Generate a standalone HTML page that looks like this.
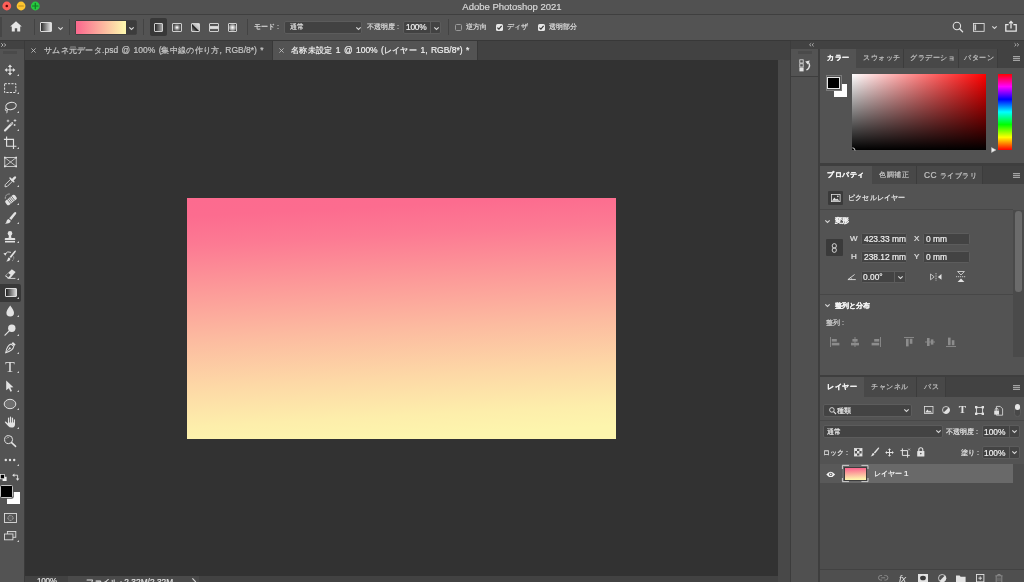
<!DOCTYPE html>
<html lang="ja">
<head>
<meta charset="utf-8">
<title>Adobe Photoshop 2021</title>
<style>
*{box-sizing:border-box;margin:0;padding:0}
html,body{width:1024px;height:582px;overflow:hidden;background:#535353}
body{font-family:"Liberation Sans",sans-serif;font-size:8.6px;color:#dcdcdc;line-height:1;position:relative}
.a{position:absolute}
.g{will-change:transform}
.t{position:absolute;white-space:nowrap;will-change:transform;-webkit-text-stroke:0.2px;line-height:10px;height:10px;font-size:7.3px}
.n{font-size:8.4px;letter-spacing:-0.25px;color:#f0f0f0}
.n2{font-size:8.4px;letter-spacing:0;color:#f0f0f0}
.b{font-weight:bold}
.j{font-size:8.4px;letter-spacing:0.3px}
svg{position:absolute;overflow:visible}
/* ---------- frame ---------- */
#title{left:0;top:0;width:1024px;height:14px;background:#515151}
#title-line{left:0;top:13.5px;width:1024px;height:1.3px;background:#3f3f3f}
#opts{left:0;top:15px;width:1024px;height:24.5px;background:#535353}
#tabbar{left:0;top:39.5px;width:1024px;height:20.5px;background:#424242;border-top:1px solid #383838}
#canvas{left:25px;top:60.4px;width:753px;height:515.6px;background:#323232}
#vscroll{left:778px;top:60.4px;width:12px;height:522px;background:#484848}
#status{left:25px;top:576px;width:753px;height:6px;background:#424242}
#tools{left:0;top:49px;width:24px;height:533px;background:#535353}
#tools-head{left:0;top:39.5px;width:24px;height:9.5px;background:#424242;border-top:1px solid #3a3a3a}
#tools-edge{left:24px;top:40.5px;width:1px;height:542px;background:#3a3a3a}
.sep{position:absolute;width:1px;background:#434343;top:19px;height:16px}
.field{position:absolute;background:#454545;border:1px solid #656565;border-radius:2px}
.dd{position:absolute;background:#424242;border:1px solid #5c5c5c;border-radius:2px}
.cb{position:absolute;width:7px;height:7px;border-radius:1.5px}
.cb.off{border:1px solid #9a9a9a;background:#535353}
.cb.on{background:#e6e6e6}
.gi{top:22.5px;width:9.5px;height:9.5px;border:1px solid #cfcfcf;border-radius:1px}
/* ---------- dock ---------- */
#dock-edge{left:789.5px;top:40.5px;width:1.6px;height:542px;background:#3c3c3c}
#strip{left:791px;top:49px;width:27px;height:533px;background:#505050}
#strip-cell{left:791px;top:49px;width:27px;height:28px;background:#535353;border-bottom:1px solid #3e3e3e}
#strip-edge{left:818px;top:49px;width:2px;height:533px;background:#3e3e3e}
#dock-head{left:791px;top:39.5px;width:233px;height:9.5px;background:#424242;border-top:1px solid #3a3a3a}
#dock-bg{left:820px;top:49px;width:204px;height:533px;background:#3e3e3e}
.ptabs{position:absolute;left:820px;width:204px;height:19px;background:#424242}
.ptab{position:absolute;top:0;height:19px;background:#484848;border-right:1px solid #3c3c3c}
.ptab.on{background:#535353;border-right:none}
.pbody{position:absolute;left:820px;width:204px;background:#535353}
</style>
</head>
<body>
<!-- title bar -->
<div class="a" id="title"></div>
<div class="a" id="title-line"></div>
<svg style="left:0;top:0" width="44" height="13" viewBox="0 0 44 13"><circle cx="6.8" cy="6" r="4.4" fill="#ff5f58"/><circle cx="6.8" cy="6" r="1.3" fill="#5c0805"/><circle cx="21.05" cy="6" r="4.4" fill="#fec430"/><rect x="18.3" y="5.4" width="5.5" height="1.2" rx="0.4" fill="#b98a1c"/><circle cx="35.3" cy="6" r="4.4" fill="#28c940"/><path d="M32.6 6 H38 M35.3 3.3 V8.7" stroke="#0d7d24" stroke-width="1.2" stroke-linecap="round"/></svg>
<div class="t" style="left:412px;width:200px;text-align:center;top:2px;font-size:9.5px;color:#d8d8d8">Adobe Photoshop 2021</div>

<!-- options bar -->
<div class="a" id="opts"></div>
<div class="a" style="left:0;top:17px;width:2px;height:20px;background:#464646"></div>
<!-- home -->
<svg style="left:10px;top:21px" width="12" height="11" viewBox="0 0 12 11"><path d="M6 0.2 L0.2 5.4 H1.8 V10.6 H4.8 V7.2 H7.2 V10.6 H10.2 V5.4 H11.8 Z" fill="#e6e6e6"/></svg>
<div class="sep" style="left:34px"></div>
<!-- gradient tool icon -->
<div class="a" style="left:40px;top:22px;width:12px;height:9.5px;border:1px solid #dadada;border-radius:1px;background:linear-gradient(90deg,#2c2c2c,#e8e8e8)"></div>
<svg style="left:58px;top:26.5px" width="5" height="3" viewBox="0 0 5 3"><path d="M0.3 0.3 L2.5 2.5 L4.7 0.3" fill="none" stroke="#d6d6d6" stroke-width="1.1"/></svg>
<div class="sep" style="left:69px"></div>
<!-- gradient preview -->
<div class="a" style="left:75px;top:20px;width:62px;height:15px;background:#3c3c3c;border:1px solid #404040;border-radius:2px"></div>
<div class="a" style="left:76px;top:21px;width:50px;height:13px;background:linear-gradient(90deg,#fb6c8f 4%,#fdf5ad 96%)"></div>
<svg style="left:128.5px;top:26.5px" width="5" height="3" viewBox="0 0 5 3"><path d="M0.3 0.3 L2.5 2.5 L4.7 0.3" fill="none" stroke="#d6d6d6" stroke-width="1.1"/></svg>
<div class="sep" style="left:143px"></div>
<!-- gradient type icons -->
<div class="a" style="left:150px;top:18px;width:17px;height:18px;background:#383838;border-radius:2px"></div>
<div class="a gi" style="left:153.5px;background:linear-gradient(90deg,#262626,#a2a2a2)"></div>
<div class="a gi" style="left:172px;background:radial-gradient(circle closest-side,#f6f6f6 12%,#8c8c8c 60%,#4c4c4c 110%)"></div>
<div class="a gi" style="left:190.5px;background:linear-gradient(225deg,#e2e2e2 0%,#b4b4b4 49%,#0e0e0e 51%,#9a9a9a 100%)"></div>
<div class="a gi" style="left:209px;background:linear-gradient(180deg,#4a4a4a 0%,#5a5a5a 22%,#cfcfcf 34%,#dedede 50%,#cfcfcf 66%,#5a5a5a 78%,#4a4a4a 100%)"></div>
<div class="a gi" style="left:227.5px;background:radial-gradient(circle closest-side,#f6f6f6 10%,#9a9a9a 80%,#1c1c1c 138%)"></div>
<div class="sep" style="left:247px"></div>
<!-- mode -->
<div class="t" style="left:254px;top:22px">モード :</div>
<div class="dd" style="left:284px;top:20.5px;width:78px;height:13.5px"></div>
<div class="t" style="left:290px;top:22px">通常</div>
<svg style="left:355.5px;top:26.5px" width="5" height="3" viewBox="0 0 5 3"><path d="M0.3 0.3 L2.5 2.5 L4.7 0.3" fill="none" stroke="#d6d6d6" stroke-width="1.1"/></svg>
<div class="t" style="left:367px;top:22px">不透明度 :</div>
<div class="dd" style="left:403px;top:20.5px;width:38px;height:13.5px"></div>
<div class="a" style="left:430px;top:21.5px;width:1px;height:11.5px;background:#5c5c5c"></div>
<div class="t n" style="left:406px;top:22px">100%</div>
<svg style="left:433.5px;top:26.5px" width="5" height="3" viewBox="0 0 5 3"><path d="M0.3 0.3 L2.5 2.5 L4.7 0.3" fill="none" stroke="#d6d6d6" stroke-width="1.1"/></svg>
<div class="sep" style="left:448px"></div>
<div class="cb off" style="left:455px;top:23.5px"></div>
<div class="t" style="left:465.5px;top:22px">逆方向</div>
<div class="cb on" style="left:496px;top:23.5px"></div>
<svg style="left:496px;top:23.5px" width="7" height="7" viewBox="0 0 7 7"><path d="M1.4 3.6 L2.9 5.1 L5.6 1.8" fill="none" stroke="#333" stroke-width="1.1"/></svg>
<div class="t" style="left:507px;top:22px">ディザ</div>
<div class="cb on" style="left:538px;top:23.5px"></div>
<svg style="left:538px;top:23.5px" width="7" height="7" viewBox="0 0 7 7"><path d="M1.4 3.6 L2.9 5.1 L5.6 1.8" fill="none" stroke="#333" stroke-width="1.1"/></svg>
<div class="t" style="left:549px;top:22px">透明部分</div>
<!-- right icons -->
<svg style="left:952px;top:21px" width="12" height="12" viewBox="0 0 12 12"><circle cx="4.9" cy="5" r="3.7" fill="none" stroke="#e0e0e0" stroke-width="1.1"/><path d="M7.6 7.8 L10.6 10.8" stroke="#e0e0e0" stroke-width="1.3" stroke-linecap="round"/></svg>
<svg style="left:973px;top:23px" width="11.6" height="8.8" viewBox="0 0 11.6 8.8"><rect x="0.45" y="0.45" width="10.7" height="7.9" fill="#4c4c4c" stroke="#dcdcdc" stroke-width="0.9"/><rect x="1.5" y="1.5" width="1.6" height="5.8" fill="#cfcfcf"/></svg>
<svg style="left:991.5px;top:26px" width="5" height="3" viewBox="0 0 5 3"><path d="M0.3 0.3 L2.5 2.5 L4.7 0.3" fill="none" stroke="#d6d6d6" stroke-width="1.1"/></svg>
<svg style="left:1005px;top:20px" width="12" height="12" viewBox="0 0 12 12"><path d="M3.6 4.6 H0.8 V11.2 H11.2 V4.6 H8.4" fill="none" stroke="#e6e6e6" stroke-width="1.3"/><path d="M6 8.4 V1.8 M4.1 3.4 L6 1.4 L7.9 3.4" fill="none" stroke="#e6e6e6" stroke-width="1.3"/></svg>


<!-- tab bar -->
<div class="a" id="tabbar"></div>
<div class="a" style="left:273px;top:40.5px;width:203.5px;height:19.5px;background:#535353"></div>
<div class="a" style="left:272px;top:40.5px;width:1px;height:19.5px;background:#383838"></div>
<div class="a" style="left:476.5px;top:40.5px;width:1px;height:19.5px;background:#383838"></div>
<svg style="left:31px;top:47.5px" width="5" height="5" viewBox="0 0 5 5"><path d="M0.4 0.4 L4.6 4.6 M4.6 0.4 L0.4 4.6" stroke="#c8c8c8" stroke-width="0.8"/></svg>
<div class="t" style="left:43.5px;top:45px;font-size:8.5px;word-spacing:1px;color:#c6c6c6"><span class="j">サムネ元データ</span>.psd @ 100% (<span class="j">集中線の作り方</span>, RGB/8*) *</div>
<svg style="left:278.5px;top:47.5px" width="5" height="5" viewBox="0 0 5 5"><path d="M0.4 0.4 L4.6 4.6 M4.6 0.4 L0.4 4.6" stroke="#c8c8c8" stroke-width="0.8"/></svg>
<div class="t" style="left:290.5px;top:45px;font-size:8.5px;word-spacing:1px;color:#f0f0f0"><span class="j">名称未設定</span> 1 @ 100% (<span class="j">レイヤー</span> 1, RGB/8*) *</div>


<!-- canvas -->
<div class="a" id="canvas"></div>
<div class="a" id="vscroll"></div>
<div class="a" id="status"></div>
<div class="a" style="left:68px;top:576px;width:131px;height:6px;background:#4a4a4a"></div>
<div class="t n" style="left:36.5px;top:577.4px;font-size:8.2px;color:#e0e0e0">100%</div>
<div class="t" style="left:86px;top:577.4px;font-size:7.6px;color:#e0e0e0">ファイル : <span style="font-size:8.4px">2.32M/2.32M</span></div>
<svg style="left:192px;top:578px" width="4" height="7" viewBox="0 0 4 7"><path d="M0.4 0.4 L3.4 3.5 L0.4 6.6" fill="none" stroke="#d6d6d6" stroke-width="1.1"/></svg>
<div class="a" id="art" style="left:187px;top:198px;width:429px;height:241px;background:linear-gradient(177deg,#fc6b8f 0%,#fc6c8f 7%,#fc7a93 18%,#fc9b99 36%,#fcbba0 54%,#fdd8a6 72%,#fdeeab 87%,#fdf5ad 95%,#fdf5ad 100%)"></div>

<!-- tools -->
<div class="a" id="tools-head"></div>
<div class="a" id="tools"></div>
<div class="a" id="tools-edge"></div>
<svg style="left:0.5px;top:42.5px" width="6" height="4" viewBox="0 0 6 4"><path d="M0.3 0.3 L2 2 L0.3 3.7 M3 0.3 L4.7 2 L3 3.7" fill="none" stroke="#d0d0d0" stroke-width="0.8"/></svg>
<div class="a" style="left:3px;top:50.7px;width:14px;height:3px;background:#4a4a4a"></div>
<svg style="left:3px;top:63.0px" width="14" height="14" viewBox="0 0 14 14"><path d="M7 1.6 L9.1 4.1 H7.6 V6.4 H9.9 V4.9 L12.4 7 L9.9 9.1 V7.6 H7.6 V9.9 H9.1 L7 12.4 L4.9 9.9 H6.4 V7.6 H4.1 V9.1 L1.6 7 L4.1 4.9 V6.4 H6.4 V4.1 H4.9 Z" fill="#e2e2e2"/></svg>
<svg style="left:17.3px;top:74.2px" width="2" height="2" viewBox="0 0 2 2"><path d="M2 0 V2 H0 Z" fill="#cfcfcf"/></svg>
<svg style="left:3px;top:81.0px" width="14" height="14" viewBox="0 0 14 14"><rect x="1.6" y="2.7" width="11.2" height="8.8" fill="none" stroke="#e2e2e2" stroke-width="1" stroke-dasharray="2.2 1.2"/></svg>
<svg style="left:17.3px;top:92.2px" width="2" height="2" viewBox="0 0 2 2"><path d="M2 0 V2 H0 Z" fill="#cfcfcf"/></svg>
<svg style="left:3px;top:100.0px" width="14" height="14" viewBox="0 0 14 14"><ellipse cx="8" cy="6" rx="5.3" ry="3.6" transform="rotate(-14 8 6)" fill="none" stroke="#e2e2e2" stroke-width="1"/><circle cx="3.5" cy="9.6" r="1.2" fill="none" stroke="#e2e2e2" stroke-width="0.9"/><path d="M3.9 10.7 Q4.6 12 3.6 13.2" fill="none" stroke="#e2e2e2" stroke-width="0.9"/></svg>
<svg style="left:17.3px;top:111.2px" width="2" height="2" viewBox="0 0 2 2"><path d="M2 0 V2 H0 Z" fill="#cfcfcf"/></svg>
<svg style="left:3px;top:118.0px" width="14" height="14" viewBox="0 0 14 14"><path d="M2 12.6 L9.2 5.2" stroke="#e2e2e2" stroke-width="2.1" stroke-linecap="round"/><path d="M7.8 6.6 L9.2 5.2" stroke="#555" stroke-width="0.9"/><path d="M5 1.6 V4.2 M3.7 2.9 H6.3 M12 1.2 V3.8 M10.7 2.5 H13.3 M11.6 6 V8 M10.6 7 H12.6" stroke="#e2e2e2" stroke-width="0.8"/></svg>
<svg style="left:17.3px;top:129.2px" width="2" height="2" viewBox="0 0 2 2"><path d="M2 0 V2 H0 Z" fill="#cfcfcf"/></svg>
<svg style="left:3px;top:136.0px" width="14" height="14" viewBox="0 0 14 14"><path d="M3.6 0.6 V10.2 H13.4 M0.9 3.3 H10.5 V13" fill="none" stroke="#e2e2e2" stroke-width="1.15"/></svg>
<svg style="left:17.3px;top:147.2px" width="2" height="2" viewBox="0 0 2 2"><path d="M2 0 V2 H0 Z" fill="#cfcfcf"/></svg>
<svg style="left:3px;top:155.4px" width="14" height="14" viewBox="0 0 14 14"><rect x="1.8" y="2.6" width="11.4" height="8.8" fill="none" stroke="#e2e2e2" stroke-width="0.8"/><path d="M1.8 2.6 L13.2 11.4 M13.2 2.6 L1.8 11.4" stroke="#e2e2e2" stroke-width="0.75"/><path d="M1 1.8 h1.6 v1.6 h-1.6 z M12.4 1.8 h1.6 v1.6 h-1.6 z M1 10.6 h1.6 v1.6 h-1.6 z M12.4 10.6 h1.6 v1.6 h-1.6 z" fill="#e2e2e2"/></svg>
<svg style="left:3px;top:174.0px" width="14" height="14" viewBox="0 0 14 14"><path d="M2 12.8 L2.3 10.6 L7.4 5.5 L9.3 7.4 L4.2 12.5 Z" fill="none" stroke="#e2e2e2" stroke-width="0.9"/><path d="M7 4 L10.8 7.8" stroke="#e2e2e2" stroke-width="1.5" stroke-linecap="round"/><path d="M8.6 5.2 L11 2.8 Q12.2 1.8 13 2.8 Q13.6 3.6 12.6 4.6 L10.2 7 Z" fill="#e2e2e2"/></svg>
<svg style="left:17.3px;top:185.2px" width="2" height="2" viewBox="0 0 2 2"><path d="M2 0 V2 H0 Z" fill="#cfcfcf"/></svg>
<svg style="left:3px;top:192.0px" width="14" height="14" viewBox="0 0 14 14"><g transform="rotate(-38 8 8)"><rect x="2" y="5.2" width="12" height="5.6" rx="1.6" fill="#e2e2e2"/><path d="M5.6 5.2 V10.8 M7.3 5.2 V10.8 M9 5.2 V10.8 M10.7 5.2 V10.8" stroke="#535353" stroke-width="0.7"/></g><path d="M2.3 6.6 Q2.2 2 6.6 2" fill="none" stroke="#e2e2e2" stroke-width="0.8" stroke-dasharray="1.2 0.8"/></svg>
<svg style="left:17.3px;top:203.2px" width="2" height="2" viewBox="0 0 2 2"><path d="M2 0 V2 H0 Z" fill="#cfcfcf"/></svg>
<svg style="left:3px;top:211.0px" width="14" height="14" viewBox="0 0 14 14"><path d="M12.9 1.2 Q13.8 2 13 3 L8.3 9 L6.2 7.2 L11.2 1.6 Q12.1 0.6 12.9 1.2 Z" fill="#e2e2e2"/><path d="M5.6 7.9 L7.7 9.7 Q7.6 12.6 2 12.8 Q3.6 11.4 3.6 10 Q3.9 8.1 5.6 7.9 Z" fill="#e2e2e2"/></svg>
<svg style="left:17.3px;top:222.2px" width="2" height="2" viewBox="0 0 2 2"><path d="M2 0 V2 H0 Z" fill="#cfcfcf"/></svg>
<svg style="left:3px;top:229.7px" width="14" height="14" viewBox="0 0 14 14"><circle cx="7" cy="3.4" r="2.3" fill="#e2e2e2"/><path d="M6 5 H8 L8.4 8 H11.4 Q12.2 8 12.2 8.8 V10 H1.8 V8.8 Q1.8 8 2.6 8 H5.6 Z" fill="#e2e2e2"/><rect x="2" y="10.9" width="10" height="1.6" fill="#e2e2e2"/></svg>
<svg style="left:17.3px;top:240.9px" width="2" height="2" viewBox="0 0 2 2"><path d="M2 0 V2 H0 Z" fill="#cfcfcf"/></svg>
<svg style="left:3px;top:248.5px" width="14" height="14" viewBox="0 0 14 14"><path d="M12.6 1.6 Q13.2 2.2 12.4 3.2 L8 9 L6.6 7.8 L11.4 2 Q12.1 1.2 12.6 1.6 Z" fill="#e2e2e2"/><path d="M6.1 8.5 L7.5 9.7 Q7.2 12 3.2 12.6 Q4.8 11 4.8 9.8 Q5 8.5 6.1 8.5 Z" fill="#e2e2e2"/><path d="M1.8 5 Q4.6 1.6 8 3.4" fill="none" stroke="#e2e2e2" stroke-width="0.9"/><path d="M0.4 4.2 L3.6 4 L2.4 6.8 Z" fill="#e2e2e2"/><path d="M10.6 7.6 Q11.4 10.4 8.8 12.2" fill="none" stroke="#e2e2e2" stroke-width="0.7" stroke-dasharray="1 0.8"/></svg>
<svg style="left:17.3px;top:259.7px" width="2" height="2" viewBox="0 0 2 2"><path d="M2 0 V2 H0 Z" fill="#cfcfcf"/></svg>
<svg style="left:3px;top:267.0px" width="14" height="14" viewBox="0 0 14 14"><path d="M8.8 2.2 L12.6 5 L7.4 11 H4.6 L2 9 Z" fill="#e2e2e2"/><path d="M3 8.6 L5.4 10.4 L7.6 7.8 L5.2 6 Z" fill="#535353"/><path d="M4.6 11.4 H12.4" stroke="#e2e2e2" stroke-width="0.9"/></svg>
<svg style="left:17.3px;top:278.2px" width="2" height="2" viewBox="0 0 2 2"><path d="M2 0 V2 H0 Z" fill="#cfcfcf"/></svg>
<div class="a" style="left:0;top:284px;width:21px;height:17.5px;background:#383838;border-radius:0 2px 2px 0"></div>
<div class="a" style="left:4.7px;top:287.6px;width:12px;height:9.6px;border:1px solid #dcdcdc;border-radius:1px;background:linear-gradient(90deg,#1e1e1e,#d8d8d8)"></div>
<svg style="left:17.3px;top:296.6px" width="2" height="2" viewBox="0 0 2 2"><path d="M2 0 V2 H0 Z" fill="#cfcfcf"/></svg>
<svg style="left:3px;top:304.0px" width="14" height="14" viewBox="0 0 14 14"><path d="M7.2 1.6 Q11 6.6 11 8.8 A3.8 3.8 0 0 1 3.4 8.8 Q3.4 6.6 7.2 1.6 Z" fill="#e2e2e2"/></svg>
<svg style="left:17.3px;top:315.2px" width="2" height="2" viewBox="0 0 2 2"><path d="M2 0 V2 H0 Z" fill="#cfcfcf"/></svg>
<svg style="left:3px;top:323.0px" width="14" height="14" viewBox="0 0 14 14"><circle cx="8.8" cy="5.2" r="3.7" fill="#e2e2e2"/><path d="M6.2 7.8 L2 12.2" stroke="#e2e2e2" stroke-width="1.2" stroke-linecap="round"/></svg>
<svg style="left:17.3px;top:334.2px" width="2" height="2" viewBox="0 0 2 2"><path d="M2 0 V2 H0 Z" fill="#cfcfcf"/></svg>
<svg style="left:3px;top:341.0px" width="14" height="14" viewBox="0 0 14 14"><g transform="rotate(42 7 7)"><path d="M5.2 0.6 H8.8 V2.6 H5.2 Z" fill="#e2e2e2"/><path d="M5.2 3.3 H8.8 Q11 7 7 13.4 Q3 7 5.2 3.3 Z" fill="none" stroke="#e2e2e2" stroke-width="1"/><path d="M7 13 V8.2" stroke="#e2e2e2" stroke-width="0.8"/><circle cx="7" cy="7.4" r="1" fill="#e2e2e2"/></g></svg>
<svg style="left:17.3px;top:352.2px" width="2" height="2" viewBox="0 0 2 2"><path d="M2 0 V2 H0 Z" fill="#cfcfcf"/></svg>
<div class="a g" style="left:4.4px;top:359.3px;width:12px;height:16px;font-family:'Liberation Serif',serif;font-size:15.5px;line-height:16px;color:#e2e2e2;text-align:center">T</div>
<svg style="left:17.3px;top:371.2px" width="2" height="2" viewBox="0 0 2 2"><path d="M2 0 V2 H0 Z" fill="#cfcfcf"/></svg>
<svg style="left:3px;top:378.5px" width="14" height="14" viewBox="0 0 14 14"><path d="M3.2 1.4 L10.4 8.2 L7.3 8.5 L9 12 L7.5 12.7 L5.8 9.2 L3.2 11.2 Z" fill="#e2e2e2"/></svg>
<svg style="left:17.3px;top:389.7px" width="2" height="2" viewBox="0 0 2 2"><path d="M2 0 V2 H0 Z" fill="#cfcfcf"/></svg>
<svg style="left:3px;top:397.0px" width="14" height="14" viewBox="0 0 14 14"><ellipse cx="7" cy="7" rx="5.8" ry="4.7" fill="#6e6e6e" stroke="#e2e2e2" stroke-width="1"/></svg>
<svg style="left:17.3px;top:408.2px" width="2" height="2" viewBox="0 0 2 2"><path d="M2 0 V2 H0 Z" fill="#cfcfcf"/></svg>
<svg style="left:3px;top:415.4px" width="14" height="14" viewBox="0 0 14 14"><path d="M5.55 3.1 V8.4 M7.5 2.1 V8.4 M9.45 3.1 V8.4 M11.4 4.9 V8.8" stroke="#e2e2e2" stroke-width="1.2" stroke-linecap="round" fill="none"/><path d="M4.95 7.4 H12 V9.4 Q12 12.5 8.6 12.5 Q6.4 12.5 5.2 10.9 L2 7.5 Q1.5 6.7 2.3 6.5 Q3 6.4 4.95 8.6 Z" fill="#e2e2e2"/></svg>
<svg style="left:17.3px;top:426.6px" width="2" height="2" viewBox="0 0 2 2"><path d="M2 0 V2 H0 Z" fill="#cfcfcf"/></svg>
<svg style="left:3px;top:434.0px" width="14" height="14" viewBox="0 0 14 14"><circle cx="5.6" cy="5.6" r="4" fill="none" stroke="#e2e2e2" stroke-width="1"/><path d="M3.6 4.6 Q4.4 3.2 6 3.2" fill="none" stroke="#e2e2e2" stroke-width="0.6"/><path d="M8.6 8.6 L12.6 12.4" stroke="#e2e2e2" stroke-width="1.5" stroke-linecap="round"/></svg>
<svg style="left:3px;top:452.6px" width="14" height="14" viewBox="0 0 14 14"><circle cx="2.8" cy="7" r="1.2" fill="#e2e2e2"/><circle cx="7" cy="7" r="1.2" fill="#e2e2e2"/><circle cx="11.2" cy="7" r="1.2" fill="#e2e2e2"/></svg>
<svg style="left:17.3px;top:463.8px" width="2" height="2" viewBox="0 0 2 2"><path d="M2 0 V2 H0 Z" fill="#cfcfcf"/></svg>
<svg style="left:0;top:473.5px" width="7" height="7.5" viewBox="0 0 7 7.5"><rect x="2.6" y="2.8" width="4" height="4.2" fill="#f2f2f2"/><rect x="0.4" y="0.6" width="4" height="4.2" fill="#000" stroke="#f2f2f2" stroke-width="0.7"/></svg>
<svg style="left:11.6px;top:472.8px" width="8" height="8" viewBox="0 0 8 8"><path d="M1.8 2.2 H5.6 V6" fill="none" stroke="#e2e2e2" stroke-width="0.9"/><path d="M0.2 2.2 L2.4 0.4 V4 Z M5.6 7.8 L3.8 5.6 H7.4 Z" fill="#e2e2e2"/></svg>
<div class="a" style="left:6.8px;top:491.6px;width:13px;height:12.8px;background:#fff"></div>
<div class="a" style="left:-0.5px;top:484.6px;width:13.4px;height:13px;background:#000;border:1px solid #c4c4c4;border-radius:1.5px;box-shadow:0 0 0 0.8px #535353"></div>
<svg style="left:3.6px;top:512.8px" width="13" height="10" viewBox="0 0 13 10"><rect x="0.5" y="0.5" width="12" height="9" fill="none" stroke="#dcdcdc" stroke-width="0.9"/><circle cx="6.5" cy="5" r="2.6" fill="#5e5e5e" stroke="#dcdcdc" stroke-width="0.7" stroke-dasharray="1 0.7"/></svg>
<svg style="left:4px;top:531.4px" width="12.5" height="9.5" viewBox="0 0 12.5 9.5"><rect x="3.4" y="0.5" width="8.4" height="5.8" fill="#5e5e5e" stroke="#dcdcdc" stroke-width="0.9"/><rect x="0.5" y="3" width="8.4" height="5.8" fill="#535353" stroke="#dcdcdc" stroke-width="0.9"/></svg>
<svg style="left:17.3px;top:540.4px" width="2" height="2" viewBox="0 0 2 2"><path d="M2 0 V2 H0 Z" fill="#cfcfcf"/></svg>


<!-- dock -->
<div class="a" id="dock-edge"></div>
<div class="a" id="dock-head"></div>
<div class="a" id="dock-bg"></div>
<div class="a" id="strip"></div>
<div class="a" id="strip-cell"></div>
<div class="a" id="strip-edge"></div>
<svg style="left:809px;top:42.5px" width="5.4" height="3.6" viewBox="0 0 6 4"><path d="M2.4 0.3 L0.6 2 L2.4 3.7 M5.2 0.3 L3.4 2 L5.2 3.7" fill="none" stroke="#d0d0d0" stroke-width="0.8"/></svg>
<svg style="left:1014px;top:42.5px" width="5.4" height="3.6" viewBox="0 0 6 4"><path d="M0.6 0.3 L2.4 2 L0.6 3.7 M3.4 0.3 L5.2 2 L3.4 3.7" fill="none" stroke="#d0d0d0" stroke-width="0.8"/></svg>
<div class="a" style="left:797.5px;top:51.2px;width:14px;height:2.5px;background:#4a4a4a"></div>
<svg style="left:798.6px;top:58.6px" width="13" height="13" viewBox="0 0 13 13"><rect x="0.8" y="0.8" width="3.4" height="3.2" fill="none" stroke="#e2e2e2" stroke-width="0.8"/><rect x="0.8" y="4.8" width="3.4" height="3.2" fill="none" stroke="#e2e2e2" stroke-width="0.8"/><rect x="0.4" y="8.6" width="4.2" height="3.8" fill="#e2e2e2"/><path d="M7.3 11 Q8.6 10.6 9.8 9 Q11.6 6.4 9.4 3.4" fill="none" stroke="#e2e2e2" stroke-width="1.3"/><path d="M6.2 2.5 L10.8 1.5 L8.8 5.4 Z" fill="#e2e2e2"/></svg>
<div class="ptabs" style="top:49px"><div class="ptab on" style="left:0;width:36px"></div><div class="ptab" style="left:36px;width:48px"></div><div class="ptab" style="left:84px;width:54.5px"></div><div class="ptab" style="left:138.5px;width:39px"></div></div>
<div class="t b" style="left:826.5px;top:53px;font-size:7.4px;letter-spacing:0.5px;color:#f2f2f2">カラー</div>
<div class="t" style="left:863px;top:53px;font-size:7.4px;letter-spacing:0.5px;color:#c2c2c2">スウォッチ</div>
<div class="t" style="left:910px;top:53px;font-size:7.4px;letter-spacing:0.5px;color:#c2c2c2">グラデーショ</div>
<div class="t" style="left:964px;top:53px;font-size:7.4px;letter-spacing:0.5px;color:#c2c2c2">パターン</div>
<svg style="left:1012.5px;top:56px" width="7" height="5" viewBox="0 0 7 5"><path d="M0 0.6 H7 M0 2.5 H7 M0 4.4 H7" stroke="#a4a4a4" stroke-width="1.1"/></svg>
<div class="pbody" style="top:68px;height:95px"></div>
<div class="a" style="left:834.2px;top:84px;width:12.8px;height:12.8px;background:#fff"></div>
<div class="a" style="left:825.6px;top:75.4px;width:16px;height:15.6px;border:1px solid #7a7a7a;background:#535353;padding:0.8px"><div style="width:100%;height:100%;border:1px solid #e6e6e6;background:#000"></div></div>
<div class="a" style="left:852px;top:74px;width:134px;height:76px;background:linear-gradient(to top,#000,rgba(0,0,0,0)),linear-gradient(to right,#fff,#f00)"></div>
<svg style="left:848.6px;top:146.6px" width="7" height="7" viewBox="0 0 7 7"><defs><clipPath id="cf"><rect x="3.4" y="-1" width="5" height="4.4"/></clipPath></defs><circle cx="3.4" cy="3.4" r="2.6" fill="none" stroke="#e8e8e8" stroke-width="0.9" clip-path="url(#cf)"/></svg>
<div class="a" style="left:998px;top:74px;width:14px;height:76px;background:linear-gradient(to bottom,#f00 0%,#f0f 16.6%,#00f 33.3%,#0ff 50%,#0f0 66.6%,#ff0 83.3%,#f00 100%)"></div>
<svg style="left:991px;top:147px" width="5.5" height="6" viewBox="0 0 5.5 6"><path d="M0.5 0.5 L5 3 L0.5 5.5 Z" fill="#f0f0f0" stroke="#bbb" stroke-width="0.5"/></svg>
<div class="ptabs" style="top:165.5px;height:18.5px"><div class="ptab on" style="left:0;width:52px;height:18.5px"></div><div class="ptab" style="left:52px;width:44.5px;height:18.5px"></div><div class="ptab" style="left:96.5px;width:66px;height:18.5px"></div></div>
<div class="t b" style="left:826.7px;top:169.5px;font-size:7.4px;letter-spacing:0.5px;color:#f2f2f2">プロパティ</div>
<div class="t" style="left:878.7px;top:169.5px;font-size:7.4px;letter-spacing:0.5px;color:#c2c2c2">色調補正</div>
<div class="t" style="left:923.5px;top:169.5px;font-size:7.4px;letter-spacing:0.5px;color:#c2c2c2"><span style="font-size:8.4px">CC</span> ライブラリ</div>
<svg style="left:1012.5px;top:172.8px" width="7" height="5" viewBox="0 0 7 5"><path d="M0 0.6 H7 M0 2.5 H7 M0 4.4 H7" stroke="#a4a4a4" stroke-width="1.1"/></svg>
<div class="pbody" style="top:184px;height:191px"></div>
<div class="a" style="left:828px;top:190.5px;width:14.5px;height:14px;background:#3a3a3a;border-radius:1px"></div>
<svg style="left:830.5px;top:193.5px" width="9.5" height="8" viewBox="0 0 9.5 8"><rect x="0.4" y="0.4" width="8.7" height="7.2" fill="none" stroke="#e2e2e2" stroke-width="0.8"/><path d="M1 6.8 L3.4 3.4 L5 5.4 L6.2 4.4 L8.4 6.8 Z" fill="#e2e2e2"/><circle cx="6.8" cy="2.4" r="0.8" fill="#e2e2e2"/></svg>
<div class="t" style="left:847.5px;top:193.2px;font-size:7.2px;letter-spacing:0.2px;color:#e8e8e8">ピクセルレイヤー</div>
<div class="a" style="left:820px;top:208.5px;width:192.5px;height:1px;background:#474747"></div>
<div class="a" style="left:820px;top:293.7px;width:192.5px;height:1px;background:#474747"></div>
<div class="a" style="left:1012.5px;top:209.5px;width:11.5px;height:147px;background:#4a4a4a"></div>
<div class="a" style="left:1015px;top:211.4px;width:6.6px;height:80.3px;background:#6b6b6b;border-radius:3.3px"></div>
<svg style="left:825.3px;top:219.8px" width="5" height="3" viewBox="0 0 5 3"><path d="M0.3 0.3 L2.5 2.5 L4.7 0.3" fill="none" stroke="#d6d6d6" stroke-width="1.1"/></svg>
<div class="t b" style="left:835px;top:216.2px;font-size:7.2px;color:#f2f2f2">変形</div>
<div class="a" style="left:826px;top:239px;width:17px;height:17.3px;background:#3a3a3a;border-radius:1px"></div>
<svg style="left:831.2px;top:242.6px" width="6.6" height="10" viewBox="0 0 6.6 10"><ellipse cx="3.3" cy="2.9" rx="2.1" ry="2.3" fill="none" stroke="#e2e2e2" stroke-width="0.9"/><ellipse cx="3.3" cy="7.1" rx="2.1" ry="2.3" fill="none" stroke="#e2e2e2" stroke-width="0.9"/></svg>
<div class="t" style="left:850.3px;top:234px;font-size:8px;color:#e2e2e2">W</div>
<div class="a" style="left:860.5px;top:233px;width:46.5px;height:11.6px;background:#434343;border:1px solid #5c5c5c;border-radius:1.5px"></div>
<div class="t n2" style="left:863.5px;top:233.8px">423.33 mm</div>
<div class="t" style="left:914px;top:234px;font-size:8px;color:#e2e2e2">X</div>
<div class="a" style="left:923px;top:233px;width:46.5px;height:11.6px;background:#434343;border:1px solid #5c5c5c;border-radius:1.5px"></div>
<div class="t n2" style="left:925.5px;top:233.8px">0 mm</div>
<div class="t" style="left:851px;top:251.8px;font-size:8px;color:#e2e2e2">H</div>
<div class="a" style="left:860.5px;top:251px;width:46.5px;height:11.6px;background:#434343;border:1px solid #5c5c5c;border-radius:1.5px"></div>
<div class="t n2" style="left:863.5px;top:251.8px">238.12 mm</div>
<div class="t" style="left:914px;top:251.8px;font-size:8px;color:#e2e2e2">Y</div>
<div class="a" style="left:923px;top:251px;width:46.5px;height:11.6px;background:#434343;border:1px solid #5c5c5c;border-radius:1.5px"></div>
<div class="t n2" style="left:925.5px;top:251.8px">0 mm</div>
<svg style="left:846.8px;top:274.4px" width="9" height="6.2" viewBox="0 0 9 6.2"><path d="M7.6 0.5 L0.9 5.6 H8.8" fill="none" stroke="#e2e2e2" stroke-width="0.9"/><path d="M4.4 5.6 Q4.5 4 3.4 3.4" fill="none" stroke="#e2e2e2" stroke-width="0.7"/></svg>
<div class="a" style="left:860.5px;top:271px;width:45px;height:12.2px;background:#434343;border:1px solid #5c5c5c;border-radius:1.5px"></div>
<div class="a" style="left:894px;top:272px;width:1px;height:10.2px;background:#5c5c5c"></div>
<div class="t n2" style="left:863px;top:272.2px">0.00°</div>
<svg style="left:897.8px;top:275.8px" width="5" height="3" viewBox="0 0 5 3"><path d="M0.3 0.3 L2.5 2.5 L4.7 0.3" fill="none" stroke="#d6d6d6" stroke-width="1.1"/></svg>
<svg style="left:930.4px;top:273.4px" width="12" height="7.8" viewBox="0 0 12 9.4" preserveAspectRatio="none"><path d="M0.5 1.2 L4.2 4.7 L0.5 8.2 Z" fill="none" stroke="#e2e2e2" stroke-width="0.8"/><path d="M11.5 1.2 L7.8 4.7 L11.5 8.2 Z" fill="#e2e2e2"/><path d="M6 0 V9.4" stroke="#e2e2e2" stroke-width="0.8" stroke-dasharray="1.2 0.8"/></svg>
<svg style="left:955.8px;top:271.4px" width="10" height="11.4" viewBox="0 0 10 11.4"><path d="M1.6 0.5 L5 4 L8.4 0.5 Z" fill="none" stroke="#e2e2e2" stroke-width="0.8"/><path d="M1.6 10.9 L5 7.4 L8.4 10.9 Z" fill="#e2e2e2"/><path d="M0 5.7 H10" stroke="#e2e2e2" stroke-width="0.8" stroke-dasharray="1.2 0.8"/></svg>
<svg style="left:825.3px;top:304.4px" width="5" height="3" viewBox="0 0 5 3"><path d="M0.3 0.3 L2.5 2.5 L4.7 0.3" fill="none" stroke="#d6d6d6" stroke-width="1.1"/></svg>
<div class="t b" style="left:835px;top:300.8px;font-size:7.2px;color:#f2f2f2">整列と分布</div>
<div class="t" style="left:826px;top:317.6px;font-size:7.2px;color:#cfcfcf">整列 :</div>
<svg style="left:829.6px;top:337.2px" width="10" height="10" viewBox="0 0 10 10"><path d="M0.5 0 V10" stroke="#8c8c8c" stroke-width="0.9"/><rect x="1.8" y="2" width="5" height="2.6" fill="#8c8c8c"/><rect x="1.8" y="5.8" width="7.6" height="2.6" fill="#8c8c8c"/></svg>
<svg style="left:850.2px;top:337.2px" width="10" height="10" viewBox="0 0 10 10"><path d="M5 0 V10" stroke="#8c8c8c" stroke-width="0.9"/><rect x="2.4" y="2" width="5.2" height="2.6" fill="#8c8c8c"/><rect x="1" y="5.8" width="8" height="2.6" fill="#8c8c8c"/></svg>
<svg style="left:871px;top:337.2px" width="10" height="10" viewBox="0 0 10 10"><path d="M9.5 0 V10" stroke="#8c8c8c" stroke-width="0.9"/><rect x="3.2" y="2" width="5" height="2.6" fill="#8c8c8c"/><rect x="0.6" y="5.8" width="7.6" height="2.6" fill="#8c8c8c"/></svg>
<svg style="left:904px;top:337.2px" width="10" height="10" viewBox="0 0 10 10"><path d="M0 0.5 H10" stroke="#8c8c8c" stroke-width="0.9"/><rect x="2" y="1.8" width="2.6" height="7.6" fill="#8c8c8c"/><rect x="5.8" y="1.8" width="2.6" height="5" fill="#8c8c8c"/></svg>
<svg style="left:925px;top:337.2px" width="10" height="10" viewBox="0 0 10 10"><path d="M0 5 H10" stroke="#8c8c8c" stroke-width="0.9"/><rect x="2" y="1" width="2.6" height="8" fill="#8c8c8c"/><rect x="5.8" y="2.4" width="2.6" height="5.2" fill="#8c8c8c"/></svg>
<svg style="left:945.6px;top:337.2px" width="10" height="10" viewBox="0 0 10 10"><path d="M0 9.5 H10" stroke="#8c8c8c" stroke-width="0.9"/><rect x="2" y="0.6" width="2.6" height="7.6" fill="#8c8c8c"/><rect x="5.8" y="3.2" width="2.6" height="5" fill="#8c8c8c"/></svg>
<div class="ptabs" style="top:377.3px;height:19.4px"><div class="ptab on" style="left:0;width:44px;height:19.4px"></div><div class="ptab" style="left:44px;width:52.5px;height:19.4px"></div><div class="ptab" style="left:96.5px;width:29.5px;height:19.4px"></div></div>
<div class="t b" style="left:826.8px;top:381.6px;font-size:7.4px;letter-spacing:0.5px;color:#f2f2f2">レイヤー</div>
<div class="t" style="left:871px;top:381.6px;font-size:7.4px;letter-spacing:0.5px;color:#c2c2c2">チャンネル</div>
<div class="t" style="left:923.5px;top:381.6px;font-size:7.4px;letter-spacing:0.5px;color:#c2c2c2">パス</div>
<svg style="left:1012.5px;top:384.6px" width="7" height="5" viewBox="0 0 7 5"><path d="M0 0.6 H7 M0 2.5 H7 M0 4.4 H7" stroke="#a4a4a4" stroke-width="1.1"/></svg>
<div class="pbody" style="top:396.7px;height:186px"></div>
<div class="a" style="left:822.7px;top:404px;width:89.6px;height:13.2px;background:#434343;border:1px solid #5c5c5c;border-radius:2px"></div>
<svg style="left:828.6px;top:406.8px" width="7.4" height="7.4" viewBox="0 0 7.4 7.4"><circle cx="2.9" cy="2.9" r="2.3" fill="none" stroke="#e2e2e2" stroke-width="0.9"/><path d="M4.6 4.6 L7 7" stroke="#e2e2e2" stroke-width="1.1"/></svg>
<div class="t" style="left:837.4px;top:405.8px;font-size:7.3px;color:#e8e8e8">種類</div>
<svg style="left:904.4px;top:409.4px" width="5" height="3" viewBox="0 0 5 3"><path d="M0.3 0.3 L2.5 2.5 L4.7 0.3" fill="none" stroke="#d6d6d6" stroke-width="1.1"/></svg>
<svg style="left:924px;top:406.4px" width="9.4" height="8" viewBox="0 0 9.4 8"><rect x="0.4" y="0.4" width="8.6" height="7.2" fill="none" stroke="#e2e2e2" stroke-width="0.8"/><path d="M1.2 6.6 L3.4 3.6 L5 5.4 L6 4.6 L8.2 6.6 Z" fill="#e2e2e2"/></svg>
<svg style="left:941.8px;top:406.4px" width="8" height="8" viewBox="0 0 8 8"><circle cx="4" cy="4" r="3.5" fill="none" stroke="#e2e2e2" stroke-width="0.8"/><path d="M6.6 1.6 A3.5 3.5 0 0 1 1.6 6.6 Z" fill="#e2e2e2"/></svg>
<div class="a g" style="left:958px;top:403.4px;width:9px;height:13px;font-family:'Liberation Serif',serif;font-weight:bold;font-size:11px;line-height:13px;color:#e2e2e2;text-align:center">T</div>
<svg style="left:975.4px;top:406px" width="9" height="9" viewBox="0 0 9 9"><rect x="1.4" y="1.4" width="6.2" height="6.2" fill="none" stroke="#e2e2e2" stroke-width="0.9"/><rect x="0" y="0" width="2.4" height="2.4" fill="#e2e2e2"/><rect x="6.6" y="0" width="2.4" height="2.4" fill="#e2e2e2"/><rect x="0" y="6.6" width="2.4" height="2.4" fill="#e2e2e2"/><rect x="6.6" y="6.6" width="2.4" height="2.4" fill="#e2e2e2"/></svg>
<svg style="left:993.6px;top:405.6px" width="9" height="9.6" viewBox="0 0 9 9.6"><path d="M2.4 0.4 H6.2 L8.6 2.8 V9.2 H2.4 Z" fill="none" stroke="#e2e2e2" stroke-width="0.8"/><rect x="0.2" y="4.8" width="4.8" height="3.8" fill="#e2e2e2"/><path d="M1.2 4.8 V3.6 A1.4 1.4 0 0 1 4 3.6 V4.8" fill="none" stroke="#e2e2e2" stroke-width="0.8"/></svg>
<div class="a" style="left:1014px;top:404.5px;width:6.6px;height:12.6px;background:#484848;border:0.5px solid #5e5e5e;border-radius:3.3px"></div>
<div class="a" style="left:1014.6px;top:404.2px;width:5.6px;height:5.6px;background:#e6e6e6;border-radius:50%"></div>
<div class="a" style="left:820px;top:420px;width:204px;height:1.4px;background:#484848"></div>
<div class="a" style="left:822.7px;top:425px;width:120.5px;height:12.8px;background:#434343;border:1px solid #5c5c5c;border-radius:2px"></div>
<div class="t" style="left:827px;top:426.5px;font-size:7.3px;color:#e8e8e8">通常</div>
<svg style="left:935.6px;top:430.4px" width="5" height="3" viewBox="0 0 5 3"><path d="M0.3 0.3 L2.5 2.5 L4.7 0.3" fill="none" stroke="#d6d6d6" stroke-width="1.1"/></svg>
<div class="t" style="left:946px;top:426.5px;font-size:7.3px;color:#e2e2e2">不透明度 :</div>
<div class="a" style="left:981.6px;top:425px;width:38px;height:12.8px;background:#434343;border:1px solid #5c5c5c;border-radius:2px"></div>
<div class="a" style="left:1009px;top:426px;width:1px;height:10.8px;background:#5c5c5c"></div>
<div class="t n2" style="left:984px;top:426.6px">100%</div>
<svg style="left:1012.2px;top:430.4px" width="5" height="3" viewBox="0 0 5 3"><path d="M0.3 0.3 L2.5 2.5 L4.7 0.3" fill="none" stroke="#d6d6d6" stroke-width="1.1"/></svg>
<div class="t" style="left:823.4px;top:447.6px;font-size:7.3px;color:#e2e2e2">ロック :</div>
<svg style="left:854px;top:448.4px" width="8.4" height="8.4" viewBox="0 0 8.4 8.4"><rect x="0.4" y="0.4" width="7.6" height="7.6" fill="none" stroke="#e2e2e2" stroke-width="0.8"/><path d="M0.4 0.4 H3 V3 H0.4 Z M5.4 0.4 H8 V3 H5.4 Z M3 3 H5.4 V5.4 H3 Z M0.4 5.4 H3 V8 H0.4 Z M5.4 5.4 H8 V8 H5.4 Z" fill="#e2e2e2"/></svg>
<svg style="left:870px;top:447.4px" width="9.6" height="10" viewBox="0 0 9.6 10"><path d="M9 0.6 Q9.5 1.1 8.9 1.8 L5 6.6 L3.8 5.6 L8 0.8 Q8.6 0.2 9 0.6 Z" fill="#e2e2e2"/><path d="M3.4 6.1 L4.5 7.1 Q4.2 9 0.6 9.6 Q2 8.2 2 7.2 Q2.4 6.1 3.4 6.1 Z" fill="#e2e2e2"/></svg>
<svg style="left:884.8px;top:448px" width="9" height="9" viewBox="0 0 9 9"><path d="M4.5 0.2 L6 2 H5 V4 H7 V3 L8.8 4.5 L7 6 V5 H5 V7 H6 L4.5 8.8 L3 7 H4 V5 H2 V6 L0.2 4.5 L2 3 V4 H4 V2 H3 Z" fill="#e2e2e2"/></svg>
<svg style="left:900.4px;top:447.6px" width="10.4" height="10" viewBox="0 0 10.4 10"><path d="M2.4 0.4 V7.4 H9.8 M0.4 2.6 H7.6 V9.6" fill="none" stroke="#e2e2e2" stroke-width="1"/><path d="M8.2 0.6 L10 2.4 M10 0.6 L8.2 2.4" stroke="#e2e2e2" stroke-width="0.6"/></svg>
<svg style="left:917.4px;top:447.4px" width="7.6" height="9.8" viewBox="0 0 7.6 9.8"><rect x="0.2" y="4" width="7.2" height="5.6" rx="0.6" fill="#e2e2e2"/><path d="M1.8 4 V2.8 A2 2 0 0 1 5.8 2.8 V4" fill="none" stroke="#e2e2e2" stroke-width="1.1"/><circle cx="3.8" cy="6.6" r="0.8" fill="#535353"/></svg>
<div class="t" style="left:960.5px;top:447.6px;font-size:7.3px;color:#e2e2e2">塗り :</div>
<div class="a" style="left:981.6px;top:446px;width:38px;height:12.8px;background:#434343;border:1px solid #5c5c5c;border-radius:2px"></div>
<div class="a" style="left:1009px;top:447px;width:1px;height:10.8px;background:#5c5c5c"></div>
<div class="t n2" style="left:984px;top:447.6px">100%</div>
<svg style="left:1012.2px;top:451.4px" width="5" height="3" viewBox="0 0 5 3"><path d="M0.3 0.3 L2.5 2.5 L4.7 0.3" fill="none" stroke="#d6d6d6" stroke-width="1.1"/></svg>
<div class="a" style="left:820px;top:464px;width:204px;height:105px;background:#4d4d4d"></div>
<div class="a" style="left:820px;top:463.8px;width:192.5px;height:19.5px;background:#696969"></div>
<div class="a" style="left:820px;top:463.8px;width:21.5px;height:19.5px;background:#595959"></div>
<svg style="left:826px;top:470.6px" width="9.4" height="6.8" viewBox="0 0 9.4 6.8"><path d="M0.3 3.4 Q4.7 -2 9.1 3.4 Q4.7 8.8 0.3 3.4 Z" fill="#f4f4f4"/><circle cx="4.7" cy="3.4" r="1.7" fill="#595959"/><circle cx="4.7" cy="3.4" r="0.8" fill="#f4f4f4"/></svg>
<div class="a" style="left:844.4px;top:467.2px;width:22.4px;height:13.4px;border:0.6px solid #3c3c3c;background:linear-gradient(178deg,#fb6c8f 8%,#fdf4ad 92%)"></div>
<svg style="left:842.3px;top:465px" width="26.4" height="17" viewBox="0 0 26.4 17"><path d="M0.4 4 V0.4 H7 M19.4 0.4 H26 V4 M26 13 V16.6 H19.4 M7 16.6 H0.4 V13" fill="none" stroke="#d8d8d8" stroke-width="0.9"/></svg>
<div class="t" style="left:873.5px;top:468.8px;font-size:7.3px;color:#f4f4f4">レイヤー <span style="font-size:8px">1</span></div>
<div class="a" style="left:820px;top:568.6px;width:204px;height:1px;background:#424242"></div>
<div class="a" style="left:820px;top:569.6px;width:204px;height:13px;background:#4f4f4f"></div>
<svg style="left:878.4px;top:575.4px" width="10.4" height="5.6" viewBox="0 0 10.4 5.6"><path d="M4 0.5 H2.8 A2.3 2.3 0 0 0 2.8 5.1 H4 M6.4 0.5 H7.6 A2.3 2.3 0 0 1 7.6 5.1 H6.4 M3.2 2.8 H7.2" fill="none" stroke="#8e8e8e" stroke-width="0.9"/></svg>
<div class="a g" style="left:898.6px;top:572.6px;width:10px;height:11px;font-style:italic;font-size:9.6px;line-height:11px;color:#e2e2e2;letter-spacing:-0.4px">fx</div>
<svg style="left:917.6px;top:574.4px" width="10" height="8" viewBox="0 0 10 8"><rect x="0" y="0" width="10" height="8" fill="#e2e2e2"/><ellipse cx="5" cy="4" rx="2.9" ry="2.3" fill="#3a3a3a"/></svg>
<svg style="left:938px;top:574.4px" width="8.4" height="8.4" viewBox="0 0 8.4 8.4"><circle cx="4.2" cy="4.2" r="3.7" fill="none" stroke="#e2e2e2" stroke-width="0.8"/><path d="M6.9 1.6 A3.7 3.7 0 0 1 1.6 6.9 Z" fill="#e2e2e2"/></svg>
<svg style="left:956px;top:574.6px" width="9.6" height="8" viewBox="0 0 9.6 8"><path d="M0 0.6 H3.6 L4.6 1.8 H9.6 V8 H0 Z" fill="#e2e2e2"/></svg>
<svg style="left:976px;top:574px" width="8.4" height="8.4" viewBox="0 0 8.4 8.4"><rect x="0.5" y="0.5" width="7.4" height="7.4" fill="none" stroke="#e2e2e2" stroke-width="0.9"/><path d="M4.2 2.4 V6 M2.4 4.2 H6" stroke="#e2e2e2" stroke-width="0.9"/></svg>
<svg style="left:995.4px;top:573.6px" width="8" height="9" viewBox="0 0 8 9"><path d="M0.4 1.8 H7.6 M2.8 1.8 V0.5 H5.2 V1.8 M1.2 2 V8.8 H6.8 V2" fill="none" stroke="#8e8e8e" stroke-width="0.9"/><path d="M3 3.6 V7.4 M5 3.6 V7.4" stroke="#8e8e8e" stroke-width="0.7"/></svg>

</body>
</html>
